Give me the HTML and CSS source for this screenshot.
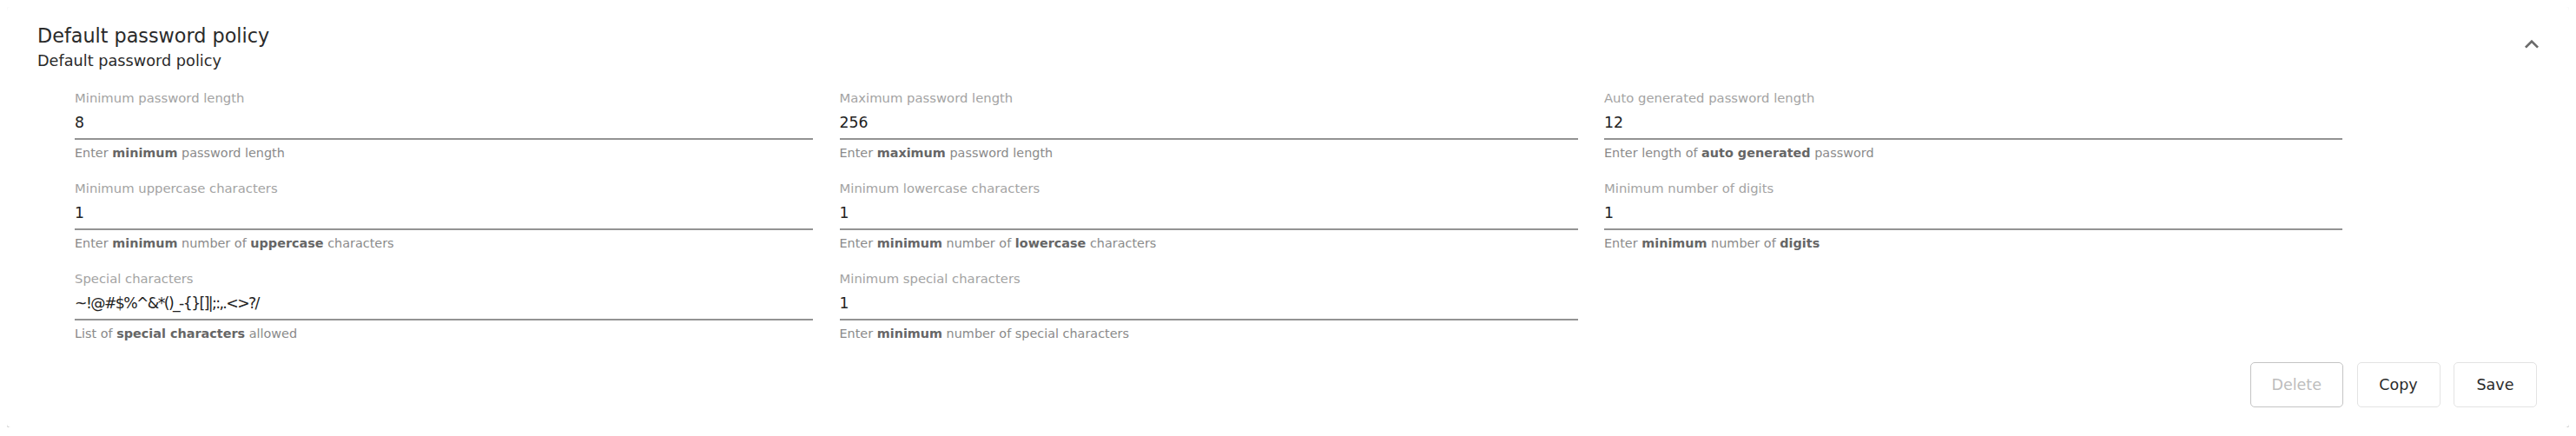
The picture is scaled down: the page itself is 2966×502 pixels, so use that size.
FILE: index.html
```html
<!DOCTYPE html>
<html lang="en">
<head>
<meta charset="utf-8">
<title>Default password policy</title>
<link rel="stylesheet" href="styles.css">
</head>
<body>
<section class="card">
  <header class="card-header">
    <div class="titles">
      <div class="title">Default password policy</div>
      <div class="subtitle">Default password policy</div>
    </div>
    <svg class="chevron" viewBox="0 0 24 24" width="32" height="32" aria-hidden="true"><path d="M12 8l-6 6 1.41 1.41L12 10.83l4.59 4.58L18 14z"/></svg>
  </header>

  <div class="fields">
    <div class="field">
      <div class="label">Minimum password length</div>
      <div class="value">8</div>
      <div class="hint">Enter <b>minimum</b> password length</div>
    </div>
    <div class="field">
      <div class="label">Maximum password length</div>
      <div class="value">256</div>
      <div class="hint">Enter <b>maximum</b> password length</div>
    </div>
    <div class="field">
      <div class="label">Auto generated password length</div>
      <div class="value">12</div>
      <div class="hint">Enter length of <b>auto generated</b> password</div>
    </div>

    <div class="field">
      <div class="label">Minimum uppercase characters</div>
      <div class="value">1</div>
      <div class="hint">Enter <b>minimum</b> number of <b>uppercase</b> characters</div>
    </div>
    <div class="field">
      <div class="label">Minimum lowercase characters</div>
      <div class="value">1</div>
      <div class="hint">Enter <b>minimum</b> number of <b>lowercase</b> characters</div>
    </div>
    <div class="field">
      <div class="label">Minimum number of digits</div>
      <div class="value">1</div>
      <div class="hint">Enter <b>minimum</b> number of <b>digits</b></div>
    </div>

    <div class="field">
      <div class="label">Special characters</div>
      <div class="value special">~!@#$%^&amp;*()_-{}[]|;:,.&lt;&gt;?/</div>
      <div class="hint">List of <b>special characters</b> allowed</div>
    </div>
    <div class="field">
      <div class="label">Minimum special characters</div>
      <div class="value">1</div>
      <div class="hint">Enter <b>minimum</b> number of special characters</div>
    </div>
  </div>

  <div class="actions">
    <button class="btn btn-disabled" type="button" disabled>Delete</button>
    <button class="btn" type="button">Copy</button>
    <button class="btn" type="button">Save</button>
  </div>
</section>
</body>
</html>
```

FILE: styles.css
```css
html, body {
  background: #ffffff;
}

body {
  margin: 8px;
  font-family: "DejaVu Sans", "Liberation Sans", sans-serif;
  color: #212121;
}

.card {
  box-sizing: border-box;
  width: 2950px;
  height: 484px;
  padding: 20px 0 23px 0;
  background: #ffffff;
  border-radius: 4px;
  box-shadow: 0 2px 1px -1px rgba(0, 0, 0, 0.2),
              0 1px 1px 0 rgba(0, 0, 0, 0.14),
              0 1px 3px 0 rgba(0, 0, 0, 0.12);
  display: flex;
  flex-direction: column;
}

.card-header {
  display: flex;
  justify-content: space-between;
  align-items: flex-start;
  padding: 0 27px 0 35px;
}

.title {
  font-size: 22.3px;
  line-height: 27px;
  color: #2a2a2a;
  margin-bottom: 4px;
}

.subtitle {
  font-size: 17.7px;
  line-height: 22px;
  color: #2a2a2a;
}

.chevron {
  display: block;
  margin-top: 7px;
  fill: #6a6a6a;
}

.fields {
  display: grid;
  grid-template-columns: repeat(3, 850px);
  column-gap: 30.5px;
  row-gap: 23px;
  margin: 23px 0 0 78px;
}

.label {
  font-size: 14.8px;
  line-height: 18px;
  color: #a3a3a3;
  white-space: nowrap;
}

.value {
  margin-top: 7px;
  padding-bottom: 6px;
  font-size: 17.3px;
  line-height: 24px;
  color: #222222;
  border-bottom: 2px solid #939393;
  white-space: nowrap;
}

.value.special {
  letter-spacing: -1.6px;
}

.hint {
  margin-top: 6px;
  font-size: 14.4px;
  line-height: 18px;
  color: #8a8a8a;
  white-space: nowrap;
}

.hint b {
  font-weight: 600;
  color: #666666;
}

.actions {
  margin-top: auto;
  display: flex;
  justify-content: flex-end;
  gap: 15.5px;
  padding-right: 37px;
}

.btn {
  box-sizing: border-box;
  height: 52px;
  min-width: 96px;
  padding: 0 24px;
  font-family: "DejaVu Sans", "Liberation Sans", sans-serif;
  font-size: 17.5px;
  color: #2b2b2b;
  background: #ffffff;
  border: 1px solid #e3e3e3;
  border-radius: 5px;
  cursor: pointer;
}

.btn-disabled {
  color: #bdbdbd;
  border-color: #c4c4c4;
  cursor: default;
}
```
